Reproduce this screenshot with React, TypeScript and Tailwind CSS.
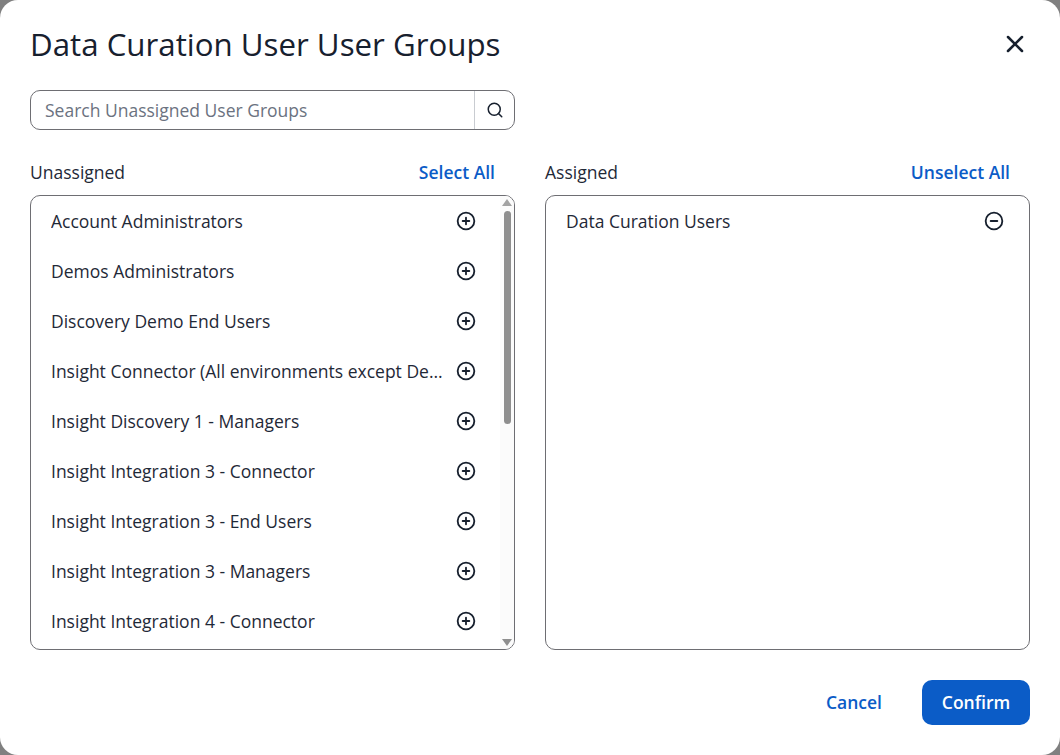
import { CircleMinus, CirclePlus, Search, X } from "lucide-react";

const unassigned = [
  "Account Administrators",
  "Demos Administrators",
  "Discovery Demo End Users",
  "Insight Connector (All environments except Demo)",
  "Insight Discovery 1 - Managers",
  "Insight Integration 3 - Connector",
  "Insight Integration 3 - End Users",
  "Insight Integration 3 - Managers",
  "Insight Integration 4 - Connector",
];

function ColumnHeader({ label, action }: { label: string; action: string }) {
  return (
    <div className="flex items-center justify-between h-[24px] mb-[11px]">
      <span className="text-[17.5px] text-[#1f2937]">{label}</span>
      <button className="mr-[20px] text-[17.5px] font-semibold text-[#0b5cc7]">{action}</button>
    </div>
  );
}

export default function App() {
  return (
    <div className="w-[1060px] h-[755px] bg-[#808080] overflow-hidden font-['Open_Sans',sans-serif]">
      <div className="w-full h-full bg-white rounded-[18px] flex flex-col px-[30px]">
        <div className="flex items-center justify-between h-[50px] mt-[19px]">
          <h1 className="text-[31.25px] text-[#17202e] leading-[50px]">Data Curation User User Groups</h1>
          <button className="mr-[1px] text-[#17202e]">
            <X className="w-[28px] h-[28px]" strokeWidth={2.2} />
          </button>
        </div>

        <div className="flex w-[485px] h-[40px] mt-[21px] border border-[#6e6e73] rounded-[10px]">
          <input
            className="flex-1 min-w-0 px-[14px] text-[17.5px] text-[#1f2937] placeholder:text-[#6b7280] outline-none bg-transparent"
            placeholder="Search Unassigned User Groups"
          />
          <button className="w-[40px] flex items-center justify-center border-l border-[#c9ccd1] text-[#17202e]">
            <Search className="w-[18px] h-[18px]" strokeWidth={2} />
          </button>
        </div>

        <div className="flex gap-[30px] mt-[30px]">
          <div className="w-[485px]">
            <ColumnHeader label="Unassigned" action="Select All" />
            <div className="relative h-[455px] border border-[#6e6e73] rounded-[10px] overflow-hidden">
              {unassigned.map((name) => (
                <div key={name} className="flex items-center h-[50px] pl-[20px] pr-[38px]">
                  <span className="w-[393px] truncate text-[17.5px] text-[#1f2937]">{name}</span>
                  <CirclePlus className="ml-auto w-[20px] h-[20px] text-[#17202e]" strokeWidth={2.2} />
                </div>
              ))}
              <div className="absolute top-0 right-0 bottom-0 w-[14px] bg-[#fbfbfb] flex flex-col items-center">
                <div className="mt-[3px] w-0 h-0 border-x-[5px] border-x-transparent border-b-[7px] border-b-[#a3a3a3]" />
                <div className="mt-[5px] w-[7px] h-[213px] rounded-full bg-[#8f8f8f]" />
                <div className="mt-auto mb-[3px] w-0 h-0 border-x-[5px] border-x-transparent border-t-[7px] border-t-[#8f8f8f]" />
              </div>
            </div>
          </div>

          <div className="w-[485px]">
            <ColumnHeader label="Assigned" action="Unselect All" />
            <div className="h-[455px] border border-[#6e6e73] rounded-[10px] overflow-hidden">
              <div className="flex items-center justify-between h-[50px] pl-[20px] pr-[25px]">
                <span className="text-[17.5px] text-[#1f2937]">Data Curation Users</span>
                <CircleMinus className="w-[20px] h-[20px] text-[#17202e]" strokeWidth={2.2} />
              </div>
            </div>
          </div>
        </div>

        <div className="flex items-center justify-end mt-[30px]">
          <button className="mr-[40px] text-[17.5px] font-semibold text-[#0b5cc7]">Cancel</button>
          <button className="w-[108px] h-[45px] rounded-[10px] bg-[#0b5cc7] text-white text-[17.5px] font-semibold">
            Confirm
          </button>
        </div>
      </div>
    </div>
  );
}
